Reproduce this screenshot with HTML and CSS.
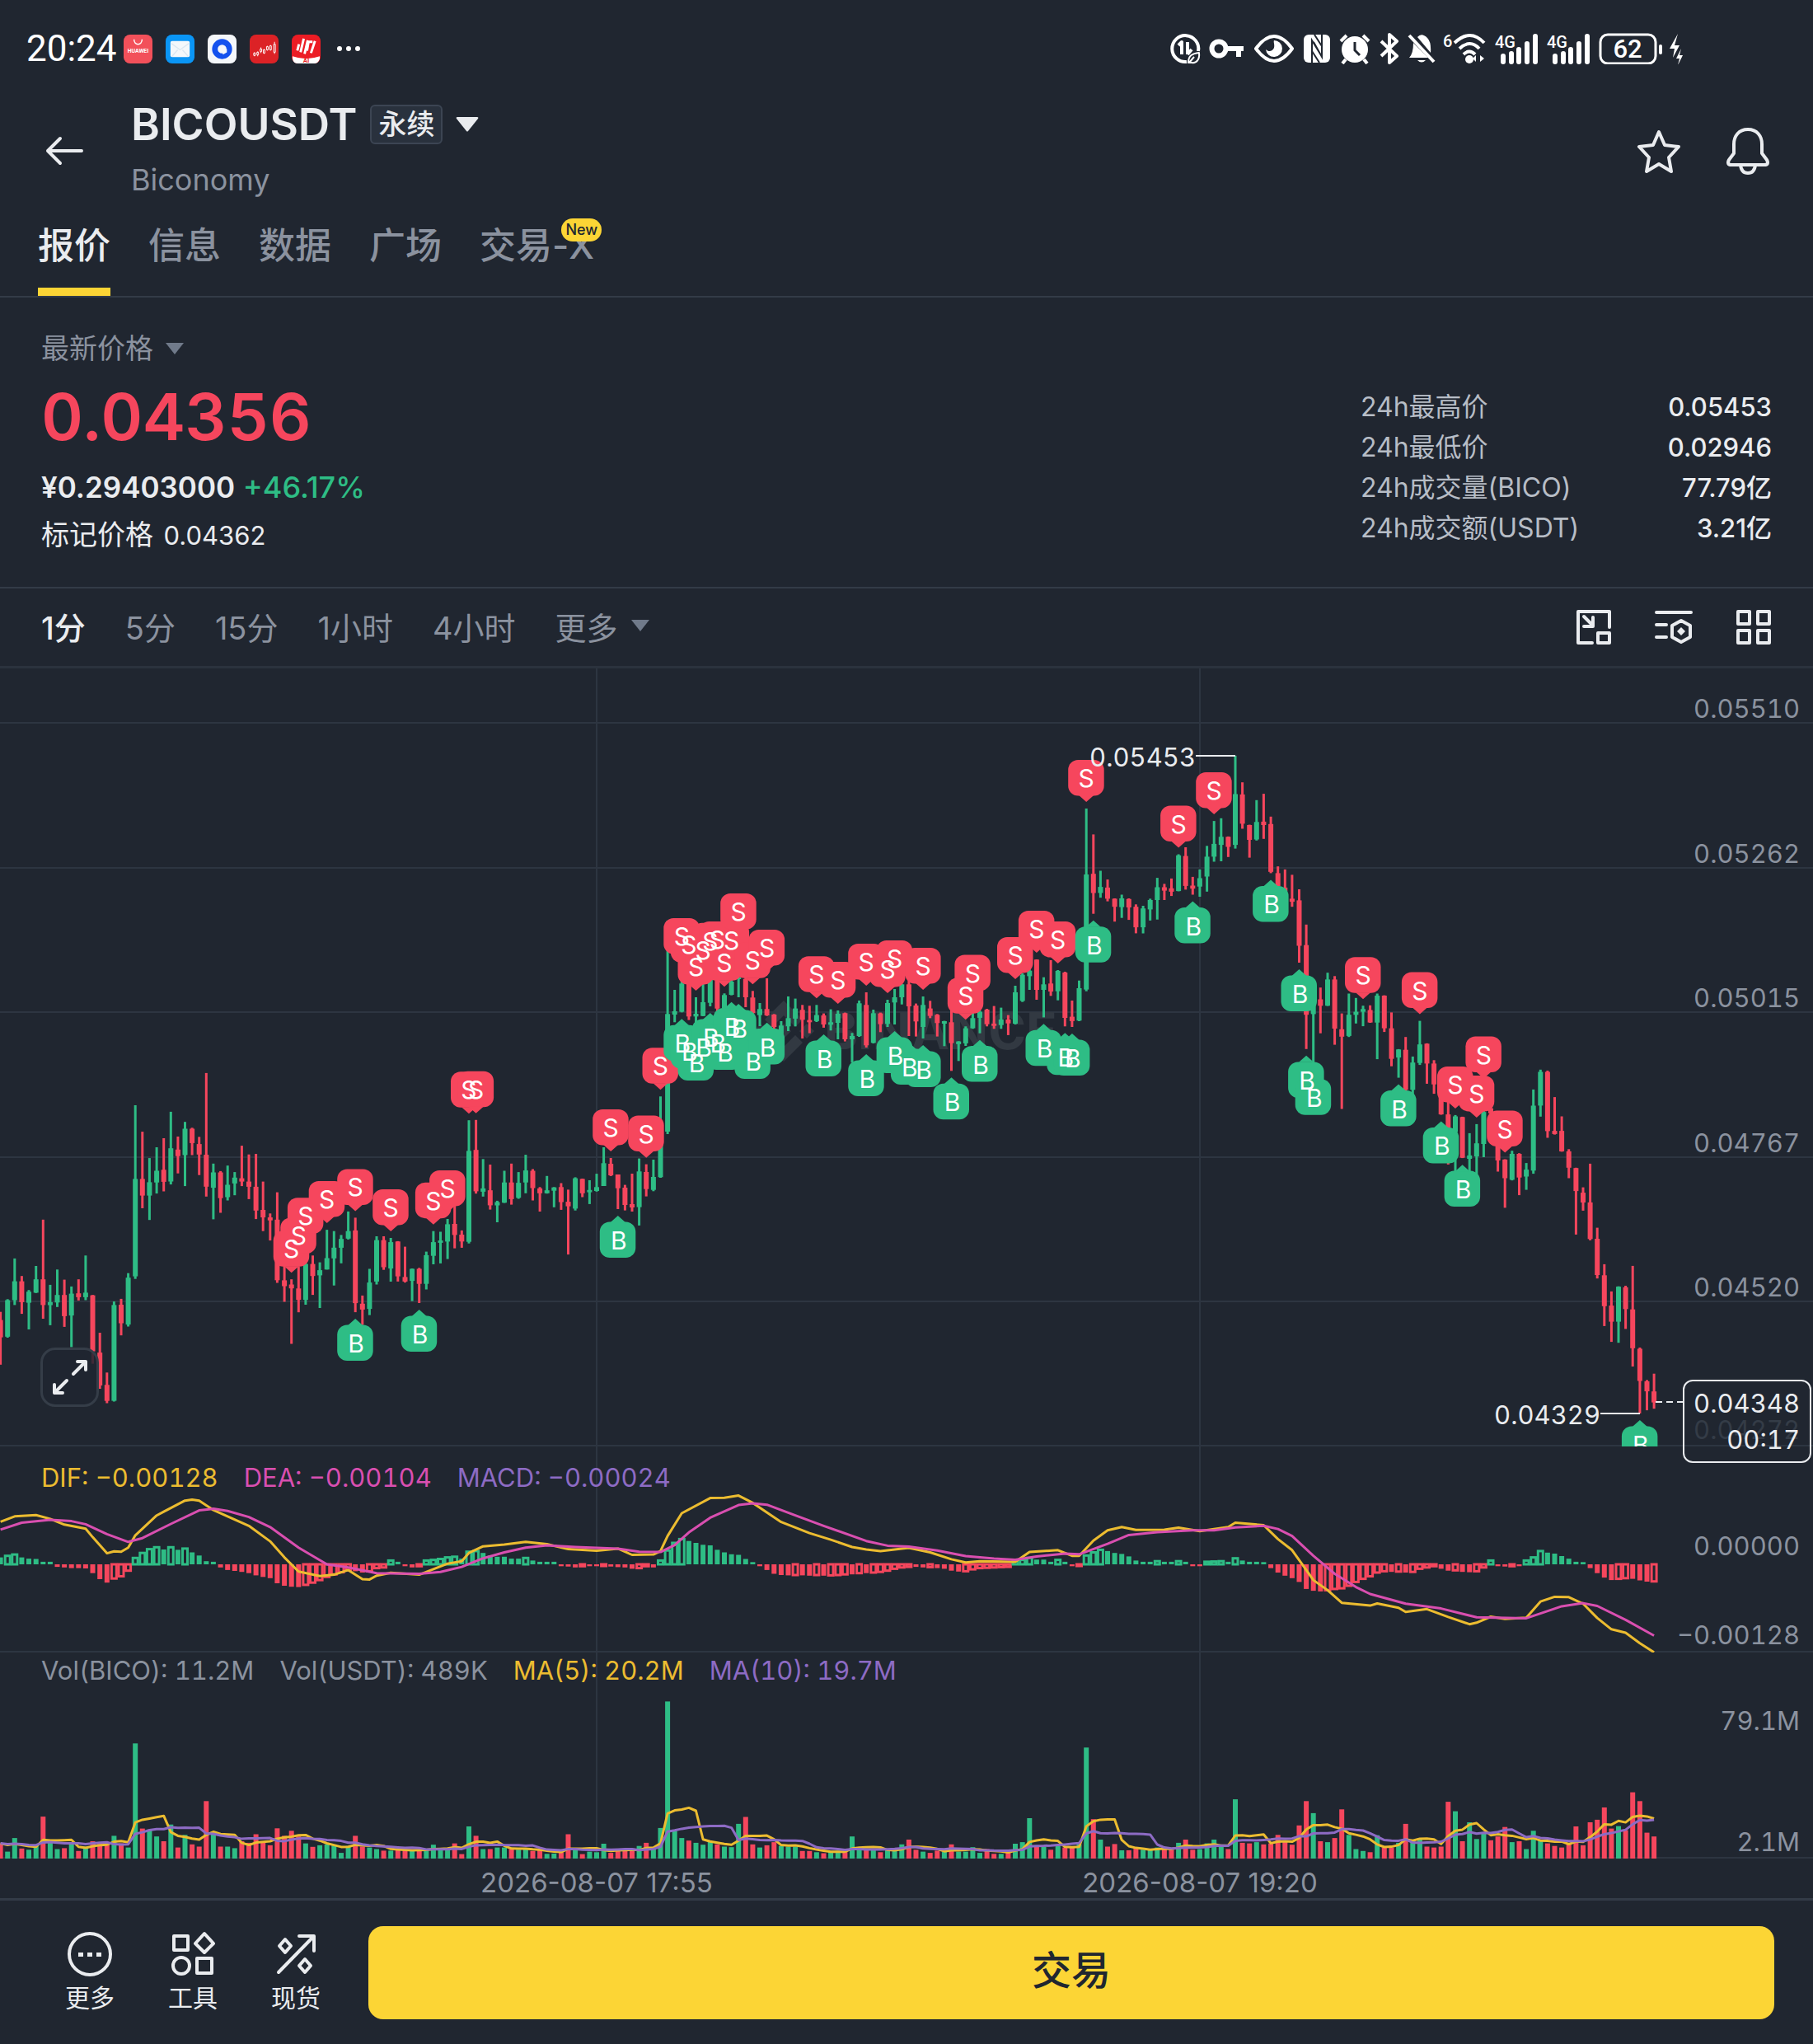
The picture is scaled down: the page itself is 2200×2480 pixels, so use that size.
FILE: index.html
```html
<!DOCTYPE html>
<html lang="zh-CN">
<head>
    <meta charset="UTF-8">
    <meta name="viewport" content="width=device-width, initial-scale=1.0">
    <title>BICOUSDT 永续</title>

    <!-- Style CSS -->
    <link rel="stylesheet" href="styles.css">
</head>
<body>
    <div class="status-bar">
        <div class="status-left">
            <span class="clock">20:24</span>
            <svg class="app" viewBox="0 0 36 36"><rect width="36" height="36" rx="8" fill="#f2505a"/><path d="M13 6c0 8 10 8 10 0" fill="none" stroke="#fff" stroke-width="1.5"/><text x="18" y="23" font-size="7" font-weight="700" fill="#fff" text-anchor="middle">HUAWEI</text></svg>
            <svg class="app" viewBox="0 0 36 36"><rect width="36" height="36" rx="8" fill="#0a95f5"/><rect x="6" y="8" width="24" height="20" rx="2" fill="#f4f8fb"/><path d="M7 11l11 8 11-8M8 27l7-8M28 27l-7-8" fill="none" stroke="#dbe8f2" stroke-width="1.5"/></svg>
            <svg class="app" viewBox="0 0 36 36"><rect width="36" height="36" rx="8" fill="#f5f7fa"/><circle cx="18" cy="18" r="9" fill="none" stroke="#1451ee" stroke-width="7"/><path d="M18 18h6v4l-5 3z" fill="#f5f7fa"/></svg>
            <svg class="app" viewBox="0 0 36 36"><rect width="36" height="36" rx="8" fill="#dc2226"/><path d="M6 22v5M10 21v6M14 16v7M18 18v6M22 14v6M26 13v7M31 9v15" stroke="#fff" stroke-width="1"/><path d="M5 23h2v3h-2zM9 22h2v3h-2zM13 18h2v3h-2zM17 19h2v4h-2zM21 15h2v4h-2zM25 14h2v5h-2zM30 12h2v10h-2z" fill="#dc2226" stroke="#fff"/></svg>
            <svg class="app" viewBox="0 0 36 36"><rect width="36" height="36" rx="8" fill="#ec1c24"/><path d="M1 27q17 6 34 0v3q-2 6-7 6H8q-6 0-7-6z" fill="#fff"/><path d="M9 12L7 20M15 5l-4 17M20 7l-4 17M29 8l-5 15M26 9h-5l-2 11" stroke="#fff" stroke-width="3" fill="none"/><text x="18" y="35" font-size="8" font-weight="700" fill="#ec1c24" text-anchor="middle">AI</text></svg>
            <svg class="more-dots" viewBox="0 0 28 8"><circle cx="3" cy="4" r="3"/><circle cx="14" cy="4" r="3"/><circle cx="25" cy="4" r="3"/></svg>
        </div>
        <div class="status-right">
            <svg width="38" height="38" viewBox="0 0 38 38"><path d="M34 22A16 16 0 1 0 20 35" class="ln"/><path d="M10 15l4-4v15M21 11v15M21 26l5-6" class="ln"/><path d="M22 36c0-9 5-11 13-12 1 8-3 13-9 12zM23 36l6-7" class="ln thin"/></svg>
            <svg width="46" height="38" viewBox="0 0 46 38"><circle cx="12" cy="19" r="8.500" fill="none" stroke="#fff" stroke-width="6"/><path d="M22 16h20v6h-3v7h-6v-7H22z"/></svg>
            <svg width="50" height="38" viewBox="0 0 50 38"><path d="M2 19Q13 4 24 4t22 15Q35 34 24 34T2 19z" class="ln"/><path d="M24 9a10 10 0 1 1-10 11c3 3 8 3 10-2 1-4-1-7 0-9z"/></svg>
            <svg width="34" height="38" viewBox="0 0 34 38"><rect x="1" y="2" width="32" height="34" rx="6"/><path d="M11 37V9l11 18M23 1v28L13 11M11 22l9 14M14 2l9 14" fill="none" stroke="#202630" stroke-width="2"/></svg>
            <svg width="40" height="38" viewBox="0 0 40 38"><circle cx="20" cy="20" r="16"/><path d="M3 10l7-7M37 10l-7-7M9 32l-4 5M31 32l4 5" class="ln"/><path d="M20 11v10l6 6" fill="none" stroke="#202630" stroke-width="3"/></svg>
            <svg width="26" height="38" viewBox="0 0 26 38"><path d="M3 10l19 18-9 8V2l9 8L3 28" class="ln"/></svg>
            <svg width="34" height="38" viewBox="0 0 34 38"><path d="M12 5q5-6 12 1 5 5 4 18zM7 12l18 18H2q5-5 5-18z"/><path d="M2 3l30 32" class="ln"/><path d="M12 33h10q-5 5-10 0z"/></svg>
            <svg width="54" height="38" viewBox="0 0 54 38"><text x="0" y="17" font-size="20" font-weight="500">6</text><path d="M14 12q19-18 36 0M20 19q13-12 24 0M25 26q7-7 14 0" fill="none" stroke="#fff" stroke-width="4"/><circle cx="32" cy="32" r="5"/><path d="M40 35v-8l-4 4zM45 27v8l5-4z"/></svg>
            <svg width="54" height="38" viewBox="0 0 54 38"><text x="0" y="18" font-size="20" font-weight="500">4G</text><path d="M10 28v7M20 25v10M29 20v15M39 13v22M49 4v31" stroke="#fff" stroke-width="6" stroke-linecap="round"/></svg>
            <svg width="54" height="38" viewBox="0 0 54 38"><text x="0" y="18" font-size="20" font-weight="500">4G</text><path d="M10 28v7M20 25v10M29 20v15M39 13v22M49 4v31" stroke="#fff" stroke-width="6" stroke-linecap="round"/></svg>
            <svg width="102" height="38" viewBox="0 0 102 38"><rect x="2" y="2" width="67" height="35" rx="9" fill="none" stroke="#fff" stroke-width="3"/><text x="35" y="30" font-size="31" font-weight="500" text-anchor="middle">62</text><rect x="73" y="14" width="4" height="12" rx="2"/><path d="M96 1l-10 18h6l-2 11 8-15h-6zM100 19l-6 12h4l-2 8 6-12h-4z"/></svg>
        </div>
    </div>

    <header class="header">
        <button class="icon-btn" aria-label="返回"><svg width="48" height="36" viewBox="0 0 48 36"><path d="M19 3L4 18l15 15M4 18h41" fill="none" stroke="#eaecef" stroke-width="4" stroke-linecap="round" stroke-linejoin="round"/></svg></button>
        <div class="pair">
            <div class="pair-line">
                <h1>BICOUSDT</h1>
                <span class="perp">永续</span>
                <svg width="28" height="20" viewBox="0 0 28 20"><path d="M2 1h24q2 0 1 2L15 18q-1 1-2 0L1 3Q0 1 2 1z" fill="#eaecef"/></svg>
            </div>
            <p class="pair-name">Biconomy</p>
        </div>
        <div class="header-actions">
            <button class="icon-btn" aria-label="收藏"><svg width="56" height="56" viewBox="0 0 56 56"><path d="M28 5l7 16 17 2-12 13 3 17-15-9-15 9 3-17L4 23l17-2z" class="out"/></svg></button>
            <button class="icon-btn" aria-label="提醒"><svg width="56" height="58" viewBox="0 0 56 58"><path d="M28 3C17 3 11 11 11 21v11L5 40q-3 6 3 6h40q6 0 3-6l-6-8V21C45 11 39 3 28 3zM19 46q1 10 9 10t9-10" class="out"/></svg></button>
        </div>
    </header>

    <nav class="tabs">
        <a class="tab active" href="#">报价</a>
        <a class="tab" href="#">信息</a>
        <a class="tab" href="#">数据</a>
        <a class="tab" href="#">广场</a>
        <a class="tab" href="#">交易-X<span class="new">New</span></a>
    </nav>

    <section class="summary">
        <div class="price-block">
            <button class="price-type">最新价格 <svg width="22" height="14" viewBox="0 0 22 14"><path d="M0 0h22L11 14z" fill="#707a8a"/></svg></button>
            <div class="last-price">0.04356</div>
            <div class="fiat"><b>¥0.29403000</b> <span class="up">+46.17%</span></div>
            <div class="mark">标记价格 <span>0.04362</span></div>
        </div>
        <table class="stats">
            <tr><th scope="row">24h最高价</th><td>0.05453</td></tr>
            <tr><th scope="row">24h最低价</th><td>0.02946</td></tr>
            <tr><th scope="row">24h成交量(BICO)</th><td>77.79亿</td></tr>
            <tr><th scope="row">24h成交额(USDT)</th><td>3.21亿</td></tr>
        </table>
    </section>

    <div class="toolbar">
        <div class="frames">
            <button class="frame active">1分</button>
            <button class="frame">5分</button>
            <button class="frame">15分</button>
            <button class="frame">1小时</button>
            <button class="frame">4小时</button>
            <button class="frame">更多 <svg width="22" height="14" viewBox="0 0 22 14"><path d="M0 0h22L11 14z" fill="#707a8a"/></svg></button>
        </div>
        <div class="tools">
            <button class="icon-btn" aria-label="小窗"><svg width="44" height="44" viewBox="0 0 44 44"><path d="M20 41H3V3h38v19" class="out"/><path d="M10 9l11 11M21 10v11H10" class="out"/><rect x="27" y="29" width="14" height="12" class="out"/></svg></button>
            <button class="icon-btn" aria-label="指标"><svg width="46" height="44" viewBox="0 0 46 44"><path d="M2 4h42M2 19h12M2 34h12" class="out"/><path d="M32 14l11 6v14l-11 6-11-6V20z" class="out"/><path d="M32 22l5 5-5 5-5-5z" fill="#eaecef"/></svg></button>
            <button class="icon-btn" aria-label="布局"><svg width="44" height="44" viewBox="0 0 44 44"><path d="M3 3h14v15H3zM27 3h14v15H27zM3 26h14v15H3zM27 26h14v15H27z" class="out"/></svg></button>
        </div>
    </div>

    <main class="chart">
        <div class="pane">
            <svg id="price" class="plot" viewBox="0 0 2200 944"></svg>
            <button class="expand" aria-label="全屏"><svg width="46" height="46" viewBox="0 0 46 46"><path d="M27 19L42 4M32 4h10v10M19 27L4 42M4 32v10h10" class="out"/></svg></button>
            <div class="tag"><span>0.04348</span><span>00:17</span></div>
        </div>
        <div class="pane">
            <div class="legend legend-macd">
                <span class="c-yellow">DIF: −0.00128</span>
                <span class="c-pink">DEA: −0.00104</span>
                <span class="c-purple">MACD: −0.00024</span>
            </div>
            <svg id="macd" class="plot" viewBox="0 0 2200 250"></svg>
        </div>
        <div class="pane">
            <div class="legend">
                <span>Vol(BICO): 11.2M</span>
                <span>Vol(USDT): 489K</span>
                <span class="c-yellow">MA(5): 20.2M</span>
                <span class="c-purple">MA(10): 19.7M</span>
            </div>
            <svg id="volume" class="plot" viewBox="0 0 2200 250"></svg>
        </div>
        <svg class="plot times" viewBox="0 0 2200 48">
            <text x="724" y="41" text-anchor="middle">2026-08-07 17:55</text>
            <text x="1456" y="41" text-anchor="middle">2026-08-07 19:20</text>
        </svg>
    </main>

    <footer class="bottom-bar">
        <div class="links">
            <button class="link"><svg width="56" height="56" viewBox="0 0 56 56"><circle cx="28" cy="28" r="25" class="out"/><path d="M14 26h6v5h-6zM25 26h6v5h-6zM36 26h6v5h-6z" fill="#eaecef"/></svg>更多</button>
            <button class="link"><svg width="56" height="56" viewBox="0 0 56 56"><path d="M5 6h17v17H5zM42 3l11 12-11 11-11-11z" class="out"/><circle cx="14" cy="42" r="10" class="out"/><rect x="33" y="33" width="18" height="18" class="out"/></svg>工具</button>
            <button class="link"><svg width="56" height="56" viewBox="0 0 56 56"><path d="M7 50L49 7M32 6h18v18M15 10l7 8-7 8-7-8zM39 34l7 8-7 8-7-8z" class="out"/></svg>现货</button>
        </div>
        <button class="trade">交易</button>
    </footer>

    <!-- Script JS -->
    <script src="script.js"></script>
</body>
</html>
```
FILE: styles.css
```css
* {
    margin: 0;
    padding: 0;
    box-sizing: border-box;
}

body {
    font-family: Inter, 'Noto Sans CJK SC', sans-serif;
    font-size: 32px;
    background: #202630;
    color: #eaecef;
}

button {
    background: none;
    border: none;
    color: inherit;
    font: inherit;
    cursor: pointer;
}

svg {
    display: block;
    flex: none;
}

.out {
    fill: none;
    stroke: #eaecef;
    stroke-width: 4;
    stroke-linejoin: round;
    stroke-linecap: round;
}

/* status bar */
.status-bar {
    display: flex;
    justify-content: space-between;
    align-items: center;
    height: 118px;
    padding: 0 158px 0 32px;
    color: #fff;
    font-family: Roboto, sans-serif;
}

.status-left {
    display: flex;
    align-items: center;
    gap: 16px;
}

.clock {
    font-size: 44px;
    margin-right: -8px;
}

.app {
    width: 35px;
    height: 35px;
}

.more-dots {
    width: 28px;
    margin-left: 4px;
    fill: #fff;
}

.status-right {
    display: flex;
    align-items: center;
    gap: 9px;
    fill: #fff;
}

.ln {
    fill: none;
    stroke: #fff;
    stroke-width: 4;
    stroke-linejoin: round;
}

.thin {
    stroke-width: 2;
}

/* header */
.header {
    display: flex;
    align-items: center;
    height: 130px;
    padding: 0 51px 0 54px;
}

.icon-btn {
    display: flex;
}

.pair {
    margin-left: 57px;
    padding-top: 4px;
}

.pair-line {
    display: flex;
    align-items: center;
    gap: 16px;
    height: 66px;
}

.pair-line h1 {
    font-size: 53px;
    font-weight: 600;
}

.perp {
    font-size: 34px;
    line-height: 44px;
    padding: 0 8px;
    background: #29313d;
    border: 2px solid #3c4553;
    border-radius: 6px;
    font-weight: 500;
}

.pair-name {
    font-size: 36px;
    line-height: 68px;
    color: #8b929f;
}

.header-actions {
    display: flex;
    align-items: center;
    gap: 52px;
    margin-left: auto;
}

/* tabs */
.tabs {
    display: flex;
    gap: 46px;
    height: 113px;
    padding: 0 46px;
    border-bottom: 2px solid #333b47;
}

.tab {
    position: relative;
    font-size: 44px;
    font-weight: 500;
    line-height: 101px;
    color: #8b929f;
    text-decoration: none;
    border-bottom: 10px solid transparent;
}

.tab.active {
    color: #eaecef;
    border-color: #fcd535;
}

.new {
    position: absolute;
    top: 17px;
    right: -9px;
    padding: 0 5px;
    font-size: 18px;
    font-weight: 500;
    line-height: 28px;
    color: #202630;
    background: #fcd535;
    border-radius: 14px;
}

/* price summary */
.summary {
    display: flex;
    justify-content: space-between;
    align-items: flex-end;
    height: 353px;
    padding: 37px 50px 47px;
    border-bottom: 2px solid #333b47;
}

.price-block {
    align-self: flex-start;
}

.price-type {
    display: flex;
    align-items: center;
    gap: 15px;
    font-size: 34px;
    line-height: 50px;
    color: #8b929f;
}

.last-price {
    font-size: 79px;
    font-weight: 600;
    line-height: 114px;
    font-variant-numeric: tabular-nums;
    color: #f6465d;
}

.fiat {
    font-size: 36px;
    font-weight: 500;
    line-height: 58px;
}

.fiat b {
    font-size: 35px;
    font-weight: 600;
}

.up {
    color: #2ebd85;
}

.mark {
    font-size: 34px;
    line-height: 58px;
}

.mark span {
    font-size: 31px;
    margin-left: 3px;
}

.stats {
    width: 499px;
    border-collapse: collapse;
    line-height: 49px;
}

.stats th {
    font-weight: 400;
    text-align: left;
    color: #b7bdc6;
}

.stats td {
    font-size: 31px;
    font-weight: 500;
    text-align: right;
}

/* time frames */
.toolbar {
    display: flex;
    justify-content: space-between;
    align-items: center;
    height: 97px;
    padding: 0 50px;
    border-bottom: 3px solid #2b323d;
}

.frames {
    display: flex;
    gap: 48px;
    padding-bottom: 4px;
}

.frame {
    display: flex;
    align-items: center;
    gap: 16px;
    font-size: 38px;
    color: #8b929f;
}

.frame.active {
    color: #eaecef;
    font-weight: 500;
}

.tools {
    display: flex;
    gap: 52px;
}

/* chart */
.pane {
    position: relative;
    font-size: 31px;
    font-variant-numeric: tabular-nums;
}

.plot {
    width: 100%;
    height: auto;
}

.plot text {
    font-size: 31px;
    fill: #8b929f;
}

.times text {
    font-size: 33px;
}

.grid {
    stroke: #2d3541;
    stroke-width: 2;
    fill: none;
}

.green {
    fill: #2ebd85;
    stroke: #2ebd85;
}

.red {
    fill: #f6465d;
    stroke: #f6465d;
}

.solid {
    stroke: none;
}

.hollow {
    fill: #202630;
    stroke-width: 3;
}

.line {
    fill: none;
    stroke-width: 3;
    stroke-linejoin: round;
}

.yellow {
    stroke: #ecbc30;
}

.pink {
    stroke: #d94fb0;
}

.purple {
    stroke: #8d6bc4;
}

.plot .flag {
    font-size: 30px;
    fill: #fff;
    text-anchor: middle;
}

.plot .axis {
    text-anchor: end;
}

.plot .note {
    fill: #eaecef;
    text-anchor: end;
}

.plot .ghost {
    fill: #343c47;
}

.leader {
    stroke: #eaecef;
    stroke-width: 2;
}

.plot .watermark {
    font-size: 62px;
    font-weight: 700;
    fill: #323942;
}

.mark-logo {
    fill: #323942;
}

.legend {
    position: absolute;
    top: 2px;
    left: 50px;
    display: flex;
    gap: 31px;
    line-height: 40px;
    color: #8b929f;
}

.legend-macd {
    top: 18px;
}

.c-yellow {
    color: #ecbc30;
}

.c-pink {
    color: #d94fb0;
}

.c-purple {
    color: #8d6bc4;
}

.expand {
    position: absolute;
    left: 49px;
    bottom: 48px;
    width: 71px;
    height: 72px;
    display: flex;
    align-items: center;
    justify-content: center;
    background: rgba(32, 38, 48, 0.85);
    border: 3px solid #353d48;
    border-radius: 18px;
}

.tag {
    position: absolute;
    z-index: 1;
    right: 2px;
    bottom: -20px;
    width: 156px;
    height: 101px;
    display: flex;
    flex-direction: column;
    align-items: flex-end;
    padding: 5px 12px;
    line-height: 44px;
    border: 2px solid #eaecef;
    border-radius: 12px;
}

/* bottom bar */
.bottom-bar {
    display: flex;
    align-items: center;
    gap: 57px;
    height: 177px;
    padding: 0 47px 0 78px;
    border-top: 3px solid #333b47;
}

.links {
    display: flex;
    gap: 63px;
}

.link {
    display: flex;
    flex-direction: column;
    align-items: center;
    width: 62px;
    gap: 1px;
    font-size: 30px;
    white-space: nowrap;
}

.trade {
    flex: 1;
    height: 113px;
    padding-bottom: 12px;
    font-size: 48px;
    font-weight: 500;
    color: #202630;
    background: #fcd535;
    border-radius: 18px;
}
```
FILE: script.js
```js
const STEP = 8.6115;
const X0 = 0.6;
const xOf = i => X0 + i * STEP;

// r/g = direction, then high, body top, body bottom, low in feed units.
// Each block has its own origin and unit size.
const blocks = [
    { top: 430, unit: 0.3954, bars:
        'r887 912 965 1049,g848 851 963 966,g723 793 851 866,r777 793 857 893,g820 825 859 941,g746 787 828 829,r604 787 866 908,g804 857 866 928,' +
        'g757 835 858 872,r788 835 900 933,g809 831 898 995,r787 830 842 852,g714 828 842 851,r835 836 1008 1046,r951 1012 1113 1123,r1073 1111 1160 1167,' +
        'g855 866 1160 1162,r847 865 922 959,g768 782 926 932,g253 479 778 786,r334 479 530 569,g415 489 530 605,g382 454 490 524,r354 451 488 517,' +
        'g273 385 487 496,r349 389 409 462,g304 325 406 501,r322 325 369 406,r350 372 404 467,r154 405 503 533,g432 459 506 603,r455 459 538 583,' +
        'g438 497 535 545,g458 475 493 529,r377 477 487 501,r404 487 503 541,r402 503 576 602,r487 574 597 639,r585 597 606 668,r520 604 790 798,' +
        'r700 790 808 856,r787 803 815 985,r747 815 850 888,g686 740 850 865,r714 740 777 835,g735 759 775 875,g635 722 757 757,g639 690 723 806,' +
        'g651 663 690 738,g579 639 662 665,r598 637 860 888,r837 862 880 927,g755 797 878 897,g655 667 794 803,r655 667 750 758,g660 673 754 794,' +
        'r670 671 778 794,r687 780 794 797,g754 755 792 854,r752 755 801 860,g702 713 801 818,g639 673 715 741,g641 668 675 738,g602 618 671 725,' +
        'r560 617 651 692,r637 650 671 690,g299 393 672 677,r298 390 517 524,g418 508 518 533,r435 514 560 573,g546 550 560 612,g454 490 552 553,' +
        'r432 490 541 558,g458 491 537 540,g405 453 490 523,r449 454 507 545,r504 508 523 579,g470 514 523 524,g504 505 515 566,r492 504 550 574,' +
        'r512 549 563 711,g474 477 570 576,r478 479 523 535,g483 513 520 556,g463 504 516 518' },
    { top: 230, unit: 0.3333, bars:
        'g1053 1111 1194 1194,r1092 1113 1155 1158,r1152 1152 1202 1278,r1190 1200 1263 1283,r1149 1260 1272 1287,g1094 1141 1271 1338,r1115 1143 1205 1232,g1098 1161 1208 1213,' +
        'g868 1010 1162 1164,g228 568 996 1005,g480 558 570 598,g396 457 560 562,r427 450 577 590,g507 567 577 633,g447 525 575 576,g413 440 527 540,' +
        'r408 440 548 560,g493 499 548 594,g412 450 498 500,g306 435 440 507,r430 440 507 543,r484 508 565 627,g528 550 572 612,r438 550 573 575,' +
        'r568 570 615 625,g594 610 640 645,g504 583 613 630,g512 548 585 613,r535 553 589 657,r538 590 598 638,g535 572 594 597,r566 573 606 618,' +
        'g551 598 607 628,g555 567 600 660,r563 565 660 668,g637 648 660 745,g519 529 648 651,r489 535 682 690,g552 565 673 675,r563 566 605 634,' +
        'g516 528 604 615,g477 507 526 606,g458 460 507 533,r440 460 540 648,r530 537 595 650,g504 535 615 657,r520 548 575 583,r568 571 601 650,' +
        'g593 594 603 685,r555 598 674 775,g667 668 678 739,g613 620 675 684,g530 583 620 622,g555 560 582 638,r549 552 605 613,r539 603 611 622,' +
        'g545 588 608 622,r572 588 602 645,g465 489 603 606,g420 425 520 524,g400 410 430 480,r369 370 480 516,g434 460 480 580,r372 457 486 502,' +
        'g408 411 485 518,r414 417 582 613,r519 578 594 615,g446 474 592 594' },
    { top: 50, unit: 0.4082, bars:
        'g294 490 832 837,r371 488 545 607,g479 527 545 559,r505 529 562 570,r561 562 586 630,g550 561 587 619,r561 563 588 625,r579 586 647 665,' +
        'g583 591 647 665,g562 566 594 627,g500 528 566 624,r518 528 538 566,r502 531 541 554,g430 433 539 540,r409 435 524 535,r497 523 532 550,' +
        'g475 501 526 556,g405 437 496 541,g331 399 437 452,g323 378 402 451,r377 378 408 438,g137 251 402 413,r216 252 339 354,r342 343 387 440,' +
        'g269 334 386 389,r250 333 343 384,r318 340 482 486,r466 486 525 535,r475 529 540 560,r491 562 571 586,r534 567 702 752,r639 700 907 1009,' +
        'g860 880 905 1060,r826 861 880 962,g782 802 880 881,r792 802 948 996,r903 950 972 1187,g844 907 970 973,g857 898 907 933,g880 890 898 941,' +
        'r879 893 930 931,g844 850 930 1039,r849 850 947 958,r900 947 1038 1060,g1009 1010 1034 1094,r973 1011 1130 1140,g1031 1049 1130 1145,g925 995 1050 1056,' +
        'r992 993 1052 1112,r1042 1052 1114 1142,r1120 1130 1203 1204,r1165 1203 1245 1352,g1205 1209 1255 1380,r1210 1211 1332 1333,g1259 1325 1335 1380,g1232 1289 1328 1390,' +
        'g1116 1196 1291 1330,r1180 1185 1200 1210,r1290 1295 1340 1373' },
    { top: 390, unit: 0.3827, bars:
        'r537 538 597 691,g510 520 602 604,r518 520 595 651,g549 570 592 634,g316 367 573 583,g253 260 367 402,r256 260 448 469,r340 447 457 459,' +
        'r401 447 512 513,r505 512 564 597,r564 565 638 776,r626 643 674 700,r551 674 790 794,r754 789 904 915,r870 905 1003 1066,r956 1001 1052 1116,' +
        'g940 941 1052 1119,r938 943 1012 1075,r875 1013 1136 1194,r1134 1138 1240 1343,r1237 1241 1273 1333,r1217 1273 1308 1328' }
];

const candles = [];
blocks.forEach(block => {
    block.bars.split(',').forEach(bar => {
        const v = bar.slice(1).split(' ').map(n => block.top + n * block.unit);
        candles.push({ color: bar[0] === 'g' ? 'green' : 'red', high: v[0], top: v[1], bottom: v[2], low: v[3] });
    });
});

const sells = [41, 42, 43, 46, 50, 55, 61, 63, 66, 67, 86, 91, 93, 96, 97, 98, 99, 100, 101, 102, 103, 104, 106, 108, 115, 118,
    122, 125, 126, 130, 137, 136, 143, 146, 149, 153, 166, 171, 192, 200, 205, 209, 208, 212];
const buys = [50, 59, 87, 96, 97, 98, 99, 100, 101, 102, 103, 104, 106, 108, 116, 122, 126, 128, 130, 134, 138, 147, 150, 151,
    154, 168, 179, 183, 184, 185, 197, 203, 206, 231];

const hist = [22, 27, 31, 22, 18, 17, 8, 8, -8, -10, -12, -12, -13, -28, -47, -58, -45, -38, -20, 20, 36, 48, 54, 47, 54, 46, 50, 38, 28, 10,
    8, -10, -18, -21, -24, -28, -35, -40, -44, -60, -68, -71, -72, -65, -58, -50, -40, -32, -25, -18, -22, -26, -22, -12, -10, 12, 8, -6, -10, -6,
    12, 14, 17, 22, 24, 18, 40, 42, 36, 28, 24, 24, 18, 18, 20, 12, 8, 8, 8, -6, -7, -10, -6, -6, -6, -5, -7, -9, -10, -14,
    -12, -6, -10, 12, 44, 68, 80, 74, 68, 62, 60, 46, 38, 32, 30, 17, 7, -6, -18, -30, -34, -35, -34, -35, -36, -34, -36, -35, -34, -32,
    -32, -28, -28, -26, -24, -20, -14, -10, -8, -8, -10, -9, -12, -14, -20, -23, -22, -16, -12, -11, -10, -9, -8, 12, 14, 20, 15, 15, 8, 14,
    8, -6, -5, 28, 38, 46, 42, 36, 33, 25, 12, 8, 8, 10, 8, 8, 10, 8, -6, -6, 8, 9, 10, 8, 19, 12, 8, 8, 7, -12,
    -26, -36, -44, -56, -78, -84, -86, -82, -78, -76, -68, -56, -46, -38, -26, -22, -24, -23, -26, -24, -14, -10, -6, -14, -20, -19, -24, -25, -22, -10,
    12, -6, -7, -6, -6, 12, 22, 42, 37, 34, 26, 18, 8, 7, -12, -28, -42, -50, -46, -44, -46, -51, -55, -54];

const dif = [[0, 135], [2, 152], [5, 156], [7, 144], [9, 126], [12, 113], [13, 86], [15, 35], [16, 41], [17, 40], [18, 53], [19, 92], [22, 155], [23, 167],
    [26, 202], [27, 205], [28, 202], [30, 172], [32, 152], [35, 122], [38, 73], [40, 22], [42, -23], [45, -37], [47, -33], [49, -18], [51, -47], [52, -48], [53, -36],
    [55, -27], [59, -33], [63, 2], [65, 10], [66, 36], [68, 57], [71, 63], [74, 71], [77, 64], [80, 48], [84, 43], [87, 50], [89, 30], [92, 31],
    [93, 42], [94, 90], [96, 162], [100, 210], [102, 211], [104, 218], [106, 195], [110, 134], [114, 99], [117, 78], [120, 55], [122, 47],
    [124, 42], [128, 52], [131, 38], [134, 16], [136, 6], [138, 10], [143, 8], [145, 39], [149, 45], [151, 27], [152, 27], [154, 75], [156, 108],
    [158, 118], [160, 109], [164, 110], [166, 116], [169, 105], [173, 118], [174, 132], [178, 124], [180, 80], [182, 45], [184, -18], [185, -50],
    [187, -82], [189, -122], [193, -131], [194, -124], [197, -138], [198, -151], [201, -142], [204, -167], [207, -190], [208, -185], [210, -166],
    [212, -173], [215, -169], [217, -118], [219, -103], [221, -104], [223, -125], [225, -170], [227, -206], [229, -217], [231, -250], [233, -279]];

const dea = [[0, 110], [3, 132], [7, 141], [10, 137], [12, 127], [15, 96], [18, 71], [20, 83], [24, 128], [28, 171], [30, 176], [32, 169], [35, 150],
    [38, 118], [42, 53], [46, 0], [49, -10], [53, -28], [59, -30], [62, -24], [65, -8], [68, 19], [71, 38], [74, 53], [77, 60], [81, 55],
    [87, 50], [90, 40], [93, 39], [95, 61], [97, 101], [100, 148], [104, 188], [106, 193], [108, 189], [112, 155], [116, 122], [122, 74],
    [125, 59], [128, 56], [132, 44], [136, 26], [140, 18], [143, 14], [146, 25], [150, 34], [152, 32], [156, 65], [159, 93], [163, 102],
    [168, 108], [171, 108], [174, 117], [178, 122], [180, 112], [182, 90], [185, 27], [188, -30], [191, -72], [193, -94], [198, -125],
    [203, -140], [208, -168], [215, -171], [217, -156], [220, -133], [223, -123], [225, -132], [229, -176], [233, -226]];

const vol = [48, 22, 65, 32, 28, 40, 133, 55, 30, 33, 45, 24, 38, 55, 50, 52, 72, 48, 35, 365, 95, 92, 70, 55, 108, 35, 75, 45, 38, 182,
    85, 38, 38, 33, 55, 50, 77, 50, 42, 96, 72, 88, 70, 48, 37, 42, 45, 42, 18, 40, 72, 38, 35, 30, 25, 25, 30, 28, 24, 26,
    28, 44, 32, 30, 48, 14, 102, 72, 30, 30, 35, 35, 30, 28, 30, 24, 28, 15, 16, 20, 77, 30, 14, 22, 20, 47, 18, 24, 26, 26,
    40, 50, 30, 97, 498, 88, 65, 57, 50, 44, 55, 45, 38, 36, 110, 132, 45, 35, 42, 52, 40, 38, 38, 24, 24, 20, 17, 24, 24, 24,
    70, 32, 30, 26, 20, 28, 28, 45, 60, 28, 22, 18, 25, 22, 45, 22, 22, 36, 18, 30, 15, 15, 20, 47, 52, 128, 40, 38, 28, 45,
    35, 34, 45, 352, 125, 60, 38, 46, 26, 26, 32, 28, 28, 35, 32, 28, 50, 60, 28, 30, 48, 60, 40, 30, 188, 50, 48, 52, 45, 48,
    75, 55, 44, 105, 182, 144, 55, 52, 65, 156, 75, 30, 24, 20, 74, 35, 35, 50, 110, 55, 65, 38, 35, 38, 180, 150, 55, 115, 62, 80,
    58, 70, 100, 52, 55, 30, 88, 60, 48, 40, 35, 45, 102, 42, 115, 123, 162, 95, 103, 90, 210, 182, 82, 70];

const rect = (x, y, w, h, cls, rx = 0) =>
    `<rect x="${x.toFixed(1)}" y="${y.toFixed(1)}" width="${w}" height="${Math.max(h, 2).toFixed(1)}" rx="${rx}" class="${cls}"/>`;
const label = (y, text, cls = 'axis') => `<text x="2184" y="${y}" class="${cls}">${text}</text>`;
const polyline = (points, cls) =>
    `<polyline class="line ${cls}" points="${points.map(p => p[0].toFixed(1) + ',' + p[1].toFixed(1)).join(' ')}"/>`;

// Price pane
function drawPrice() {
    let out = '<path class="grid" d="M0 66H2200M0 242H2200M0 417H2200M0 593H2200M0 768H2200M0 943H2200M724 0V944M1456 0V944"/>';
    out += '<path class="mark-logo" d="M951 403l23 23-9 9-14-14-14 14-9-9zM951 477l-23-23 9-9 14 14 14-14 9 9zM979 431l9 9-9 9-9-9zM923 431l9 9-9 9-9-9zM951 431l9 9-9 9-9-9z"/>';
    out += '<text x="1000" y="462" class="watermark">BINANCE</text>';
    candles.forEach((c, i) => {
        out += rect(xOf(i) - 1.5, c.high, 3, c.low - c.high, c.color + ' solid');
        out += rect(xOf(i) - 3, c.top, 6, c.bottom - c.top, c.color + ' solid');
    });
    let letters = '';
    sells.forEach(i => {
        const x = xOf(i), y = candles[i].high - 8;
        out += rect(x - 22, y - 51, 43.5, 43.5, 'red solid', 12);
        out += `<path class="red solid" d="M${x - 9} ${y - 8}h18l-9 8z"/>`;
        letters += `<text class="flag" x="${x}" y="${y - 18}">S</text>`;
    });
    buys.forEach(i => {
        const x = xOf(i), y = candles[i].low + 8;
        out += rect(x - 22, y + 7.5, 43.5, 43.5, 'green solid', 12);
        out += `<path class="green solid" d="M${x - 9} ${y + 8}h18l-9 -8z"/>`;
        letters += `<text class="flag" x="${x + 1}" y="${y + 41}">B</text>`;
    });
    out += letters;
    out += '<path class="leader" d="M1451 106H1499M1942 904H1990"/><path class="leader" stroke-dasharray="8 5" d="M2009 890H2042"/>';
    out += '<text x="1451" y="119" class="note">0.05453</text><text x="1942" y="917" class="note">0.04329</text>';
    out += label(60, '0.05510') + label(236, '0.05262') + label(411, '0.05015') + label(587, '0.04767') + label(762, '0.04520');
    out += label(935, '0.04272', 'axis ghost');
    document.getElementById('price').innerHTML = out;
}

// MACD pane: hollow bars while the histogram rises
function drawMacd() {
    const zero = 143, unit = 0.3827;
    let out = '<path class="grid" d="M0 249H2200M724 0V250M1456 0V250"/>';
    hist.forEach((v, i) => {
        const h = Math.abs(v) * unit;
        const color = v > 0 ? 'green' : 'red';
        const y = v > 0 ? zero - h : zero;
        if (i > 0 && v > hist[i - 1]) {
            out += rect(xOf(i) - 3, y, 6, h, color + ' hollow');
        } else {
            out += rect(xOf(i) - 3, y, 6, h, color + ' solid');
        }
    });
    const scale = p => [xOf(p[0]), zero - p[1] * unit];
    out += polyline(dif.map(scale), 'yellow') + polyline(dea.map(scale), 'pink');
    out += label(132, '0.00000') + label(240, '−0.00128');
    document.getElementById('macd').innerHTML = out;
}

// Volume pane with its moving averages
function drawVolume() {
    const base = 250, unit = 0.3827;
    const average = n => vol.map((v, i) => {
        const part = vol.slice(Math.max(0, i - n + 1), i + 1);
        const sum = part.reduce((a, b) => a + b, 0) + (n - part.length) * 48;
        return [xOf(i), base - sum / n * unit];
    });
    let out = '<path class="grid" d="M0 249H2200M724 0V250M1456 0V250"/>';
    vol.forEach((v, i) => {
        out += rect(xOf(i) - 3, base - v * unit, 6, v * unit, candles[i].color + ' solid');
    });
    out += polyline(average(5), 'yellow') + polyline(average(10), 'purple');
    out += label(94, '79.1M') + label(241, '2.1M');
    document.getElementById('volume').innerHTML = out;
}

drawPrice();
drawMacd();
drawVolume();
```
